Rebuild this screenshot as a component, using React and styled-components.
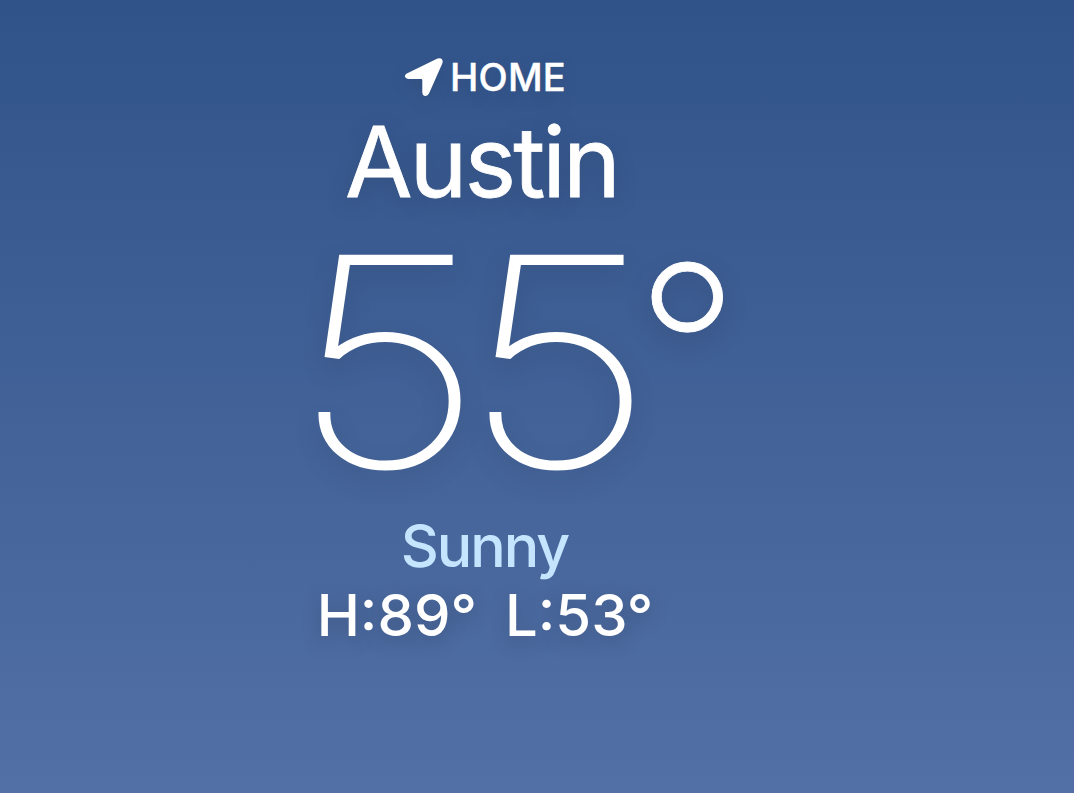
import React from "react"
import styled, { createGlobalStyle } from "styled-components"

const GlobalStyle = createGlobalStyle`
  body {
    margin: 0;
  }
`

const Page = styled.main`
  background: linear-gradient(180deg, #30538a 0%, #5270a5 100%);
  box-sizing: border-box;
  color: #ffffff;
  font-family: Inter, "Liberation Sans", sans-serif;
  height: 793px;
  overflow: hidden;
  padding: 54px 104px 0 0;
  text-align: center;
  width: 1074px;
`

const Label = styled.div`
  align-items: center;
  display: flex;
  font-size: 38px;
  font-weight: 500;
  gap: 6px;
  height: 46px;
  justify-content: center;
  letter-spacing: 0.2px;
  -webkit-text-stroke: 0.4px #ffffff;
  text-shadow: 0 6px 16px rgba(50, 65, 95, 0.3);
`

const Arrow = styled.svg`
  filter: drop-shadow(0 5px 7px rgba(50, 65, 95, 0.3));
  height: 40px;
  width: 40px;
`

const City = styled.h1`
  font-size: 98px;
  font-weight: 400;
  letter-spacing: -3px;
  line-height: 120px;
  margin: 2px 0 0;
  padding-right: 7px;
  -webkit-text-stroke: 0.8px #ffffff;
  text-shadow: 0 6px 20px rgba(50, 65, 95, 0.4);
`

const Temperature = styled.div`
  display: flex;
  height: 290px;
  justify-content: center;
  padding-left: 58px;
  text-shadow: 0 10px 22px rgba(50, 65, 95, 0.45);
`

const Digit = styled.span`
  font-size: 288px;
  font-weight: 100;
  line-height: 278px;
  text-align: center;
  transform: scaleX(1.175);
  -webkit-text-stroke: 3.6px #ffffff;
  width: 171px;
`

const Degree = styled.span`
  font-size: 230px;
  font-weight: 200;
  line-height: 250px;
  margin-left: -9px;
  text-align: center;
  -webkit-text-stroke: 0.8px #ffffff;
  width: 91px;
`

const Condition = styled.div`
  color: #c5e5ff;
  font-size: 59px;
  font-weight: 500;
  letter-spacing: -2px;
  line-height: 68px;
  padding-right: 1px;
`

const Range = styled.div`
  display: flex;
  font-size: 58px;
  font-weight: 500;
  gap: 28px;
  justify-content: center;
  line-height: 70px;
  text-shadow: 0 6px 18px rgba(50, 65, 95, 0.45);
`

const App = () => (
  <>
    <GlobalStyle />
    <Page>
      <Label>
        <Arrow viewBox="0 0 40 40">
          <path
            fill="#ffffff"
            d="M2.8 16.4 L33.5 1.6 Q36 0.6 37.8 2 Q39.2 3.7 38.3 6.4 L25 36.6 Q23.6 39.4 20.8 38.9 Q18.3 38.4 18.3 35.5 V22.9 Q18.3 21.9 17.3 21.9 H4.5 Q1.5 21.9 0.9 19.5 Q0.7 17.4 2.8 16.4Z"
          />
        </Arrow>
        <span>HOME</span>
      </Label>
      <City>Austin</City>
      <Temperature>
        <Digit>5</Digit>
        <Digit>5</Digit>
        <Degree>°</Degree>
      </Temperature>
      <Condition>Sunny</Condition>
      <Range>
        <span>H:89°</span>
        <span>L:53°</span>
      </Range>
    </Page>
  </>
)

export default App
